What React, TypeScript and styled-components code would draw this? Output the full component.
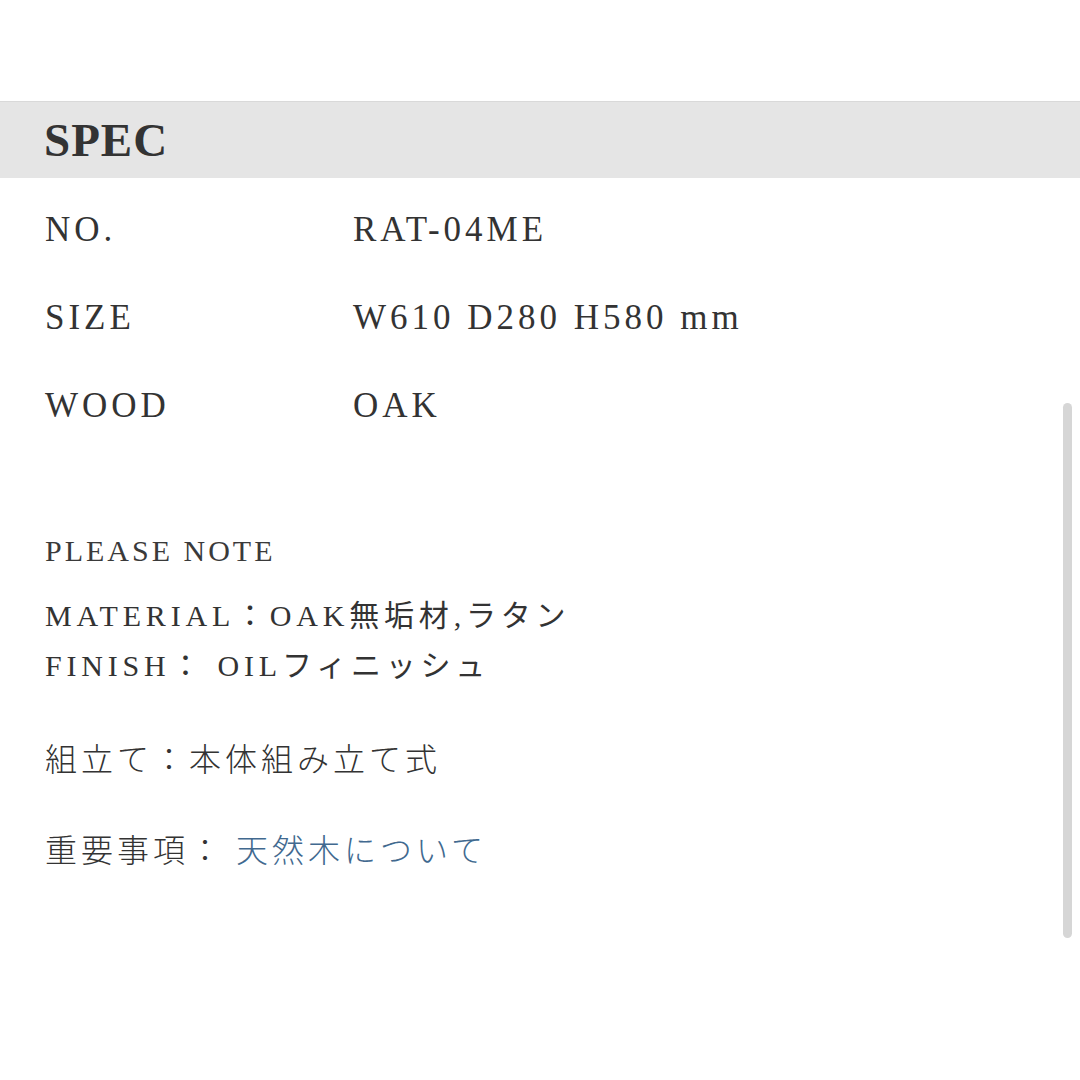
import styled, { createGlobalStyle } from "styled-components";

const GlobalStyle = createGlobalStyle`
  html, body {
    margin: 0;
    padding: 0;
    background: #ffffff;
  }
  body {
    font-family: "Liberation Serif", "Noto Sans CJK JP", serif;
    color: #353535;
  }
`;

const specs = [
  { label: "NO.", value: "RAT-04ME" },
  { label: "SIZE", value: "W610 D280 H580 mm" },
  { label: "WOOD", value: "OAK" },
];

export default function App() {
  return (
    <Page>
      <GlobalStyle />
      <Header>
        <Title>SPEC</Title>
      </Header>
      <SpecList>
        {specs.map((s) => (
          <SpecRow key={s.label}>
            <Label>{s.label}</Label>
            <Value>{s.value}</Value>
          </SpecRow>
        ))}
      </SpecList>
      <Notes>
        <NoteTitle>PLEASE NOTE</NoteTitle>
        <NoteBlock>
          <NoteLine>MATERIAL：OAK無垢材,ラタン</NoteLine>
          <NoteLine>FINISH： OILフィニッシュ</NoteLine>
        </NoteBlock>
        <JpLine>組立て：本体組み立て式</JpLine>
        <JpLine>
          重要事項： <Link href="#">天然木について</Link>
        </JpLine>
      </Notes>
      <ScrollThumb />
    </Page>
  );
}

const Page = styled.div`
  position: relative;
  min-height: 1080px;
  padding-top: 101px;
  box-sizing: border-box;
  overflow: hidden;
`;

const Header = styled.div`
  height: 77px;
  background: #e5e5e5;
  border-top: 1px solid #d9d9d9;
  box-sizing: border-box;
  display: flex;
  align-items: center;
  padding-left: 44px;
`;

const Title = styled.h2`
  margin: 0;
  font-family: "Liberation Serif", serif;
  font-weight: 700;
  font-size: 47px;
  letter-spacing: 1px;
  color: #333333;
  line-height: 1;
`;

const SpecList = styled.div`
  padding: 8px 0 0 45px;
`;

const SpecRow = styled.div`
  display: grid;
  grid-template-columns: 308px 1fr;
  height: 88px;
  align-items: center;
  font-size: 35px;
  letter-spacing: 4px;
  color: #333333;
`;

const Label = styled.div``;

const Value = styled.div``;

const Notes = styled.div`
  padding: 79px 0 0 45px;
  display: flex;
  flex-direction: column;
`;

const NoteTitle = styled.div`
  font-size: 30px;
  letter-spacing: 3px;
  line-height: 44px;
  color: #3a3a3a;
`;

const NoteBlock = styled.div`
  margin-top: 18px;
`;

const NoteLine = styled.div`
  font-size: 30px;
  letter-spacing: 4.8px;
  line-height: 50px;
  color: #333333;
`;

const JpLine = styled.div`
  font-family: "Noto Sans CJK JP", sans-serif;
  font-weight: 300;
  font-size: 32px;
  letter-spacing: 4px;
  line-height: 50px;
  margin-top: 41px;
  color: #333333;
`;

const Link = styled.a`
  color: #41698f;
  text-decoration: none;
`;

const ScrollThumb = styled.div`
  position: absolute;
  top: 403px;
  left: 1063px;
  width: 9px;
  height: 535px;
  border-radius: 5px;
  background: #d6d6d6;
`;
